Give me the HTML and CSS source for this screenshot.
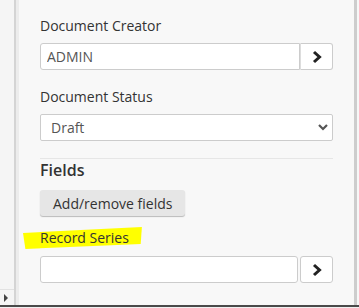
FILE: index.html
```html
<!DOCTYPE html>
<html lang="en">
<head>
    <meta charset="UTF-8">
    <title>Document Properties</title>
    <link rel="stylesheet" href="styles.css">
</head>
<body>
    <div class="frame">
        <div class="gutter">
            <div class="gutter-corner">
                <span class="gutter-arrow"></span>
            </div>
        </div>
        <div class="divider"></div>
        <div class="panel">
            <div class="field">
                <label class="label">Document Creator</label>
                <div class="input-group">
                    <input type="text" class="input" value="ADMIN">
                    <button class="go-btn joined">
                        <svg width="10" height="14" viewBox="0 0 10 14"><path d="M2 2 L7.5 7 L2 12" fill="none" stroke="#222" stroke-width="3"/></svg>
                    </button>
                </div>
            </div>

            <div class="field">
                <label class="label">Document Status</label>
                <div class="select-wrap">
                    <select class="select">
                        <option>Draft</option>
                    </select>
                    <svg class="select-caret" width="10" height="7" viewBox="0 0 10 7"><path d="M1 1 L5 5 L9 1" fill="none" stroke="#555" stroke-width="2.2"/></svg>
                </div>
            </div>

            <hr class="sep">

            <h3 class="section-title">Fields</h3>
            <button class="plain-btn">Add/remove fields</button>

            <div class="field">
                <label class="label label-gap"><span class="marker">Record Series</span></label>
                <div class="input-group">
                    <input type="text" class="input short">
                    <button class="go-btn">
                        <svg width="10" height="14" viewBox="0 0 10 14"><path d="M2 2 L7.5 7 L2 12" fill="none" stroke="#222" stroke-width="3"/></svg>
                    </button>
                </div>
            </div>
        </div>
        <div class="scrollbar"></div>
    </div>
    <div class="bottom-line"></div>
</body>
</html>
```

FILE: styles.css
```css
body {
    margin: 0;
    height: 308px;
    overflow: hidden;
    font-family: 'Open Sans', 'Segoe UI', sans-serif;
    background: #f3f3f3;
    display: flex;
    flex-direction: column;
}

.frame {
    display: flex;
    height: 305px;
}

.gutter {
    width: 14px;
    background: #f5f5f5;
    display: flex;
    flex-direction: column;
    justify-content: flex-end;
}

.gutter-corner {
    height: 15px;
    border-top: 1px solid #e2e2e2;
    display: flex;
    align-items: center;
}

.gutter-arrow {
    width: 0;
    height: 0;
    margin-left: 4px;
    border-top: 4px solid transparent;
    border-bottom: 4px solid transparent;
    border-left: 4px solid #444;
}

.divider {
    width: 2px;
    background: #d4d4d4;
    border-right: 3px solid #ececec;
}

.panel {
    width: 335px;
    background: #f8f8f8;
    padding: 16px 21px 0 21px;
    box-sizing: border-box;
}

.scrollbar {
    width: 3px;
    background: #cdcdcd;
    border-right: 2px solid #f7f7f7;
}

.bottom-line {
    height: 2px;
    background: #4a4a4a;
    border-bottom: 1px solid #f0f0f0;
}

.field {
    margin-bottom: 17px;
}

.label {
    display: block;
    font-size: 14px;
    line-height: 20px;
    color: #333;
    margin-bottom: 7px;
}

.label-gap {
    margin-bottom: 8px;
}

.marker {
    position: relative;
    z-index: 0;
}

.marker::before {
    content: '';
    position: absolute;
    z-index: -1;
    left: -17px;
    right: -13px;
    top: -1px;
    bottom: -2px;
    background: #ffff00;
    clip-path: polygon(0 27%, 100% 0, 99% 77%, 2% 100%);
}

.input-group {
    display: flex;
    height: 27px;
}

.input {
    flex: 1;
    min-width: 0;
    height: 27px;
    box-sizing: border-box;
    border: 1px solid #ccc;
    border-radius: 3px 0 0 3px;
    background: #fff;
    padding: 0 6px;
    font-family: inherit;
    font-size: 14px;
    color: #555;
}

.input.short {
    border-radius: 3px;
    margin-right: 2px;
}

.go-btn {
    width: 33px;
    height: 27px;
    box-sizing: border-box;
    border: 1px solid #ccc;
    border-radius: 3px;
    background: #fff;
    display: flex;
    align-items: center;
    justify-content: center;
    padding: 0;
}

.go-btn.joined {
    border-left-color: #ddd;
    border-radius: 0 3px 3px 0;
}

.select-wrap {
    position: relative;
}

.select {
    display: block;
    width: 100%;
    height: 27px;
    border: 1px solid #ccc;
    border-radius: 2px;
    background: #fff;
    padding: 0 10px;
    font-family: inherit;
    font-size: 14px;
    color: #555;
    appearance: none;
    -webkit-appearance: none;
}

.select-caret {
    position: absolute;
    right: 5px;
    top: 10px;
}

.sep {
    border: none;
    border-top: 1px solid #e6e6e6;
    margin: 19px 0 0 0;
}

.field + .sep {
    margin-top: 2px;
}

.section-title {
    margin: 0 0 9px 0;
    font-size: 16px;
    font-weight: 600;
    line-height: 22px;
    color: #333;
}

.plain-btn {
    display: block;
    height: 26px;
    padding: 0 13px;
    border: none;
    border-radius: 3px;
    background: #e6e6e6;
    box-shadow: 0 1px 1px rgba(0, 0, 0, 0.25);
    font-family: inherit;
    font-size: 14px;
    color: #333;
    margin-bottom: 12px;
}
```
